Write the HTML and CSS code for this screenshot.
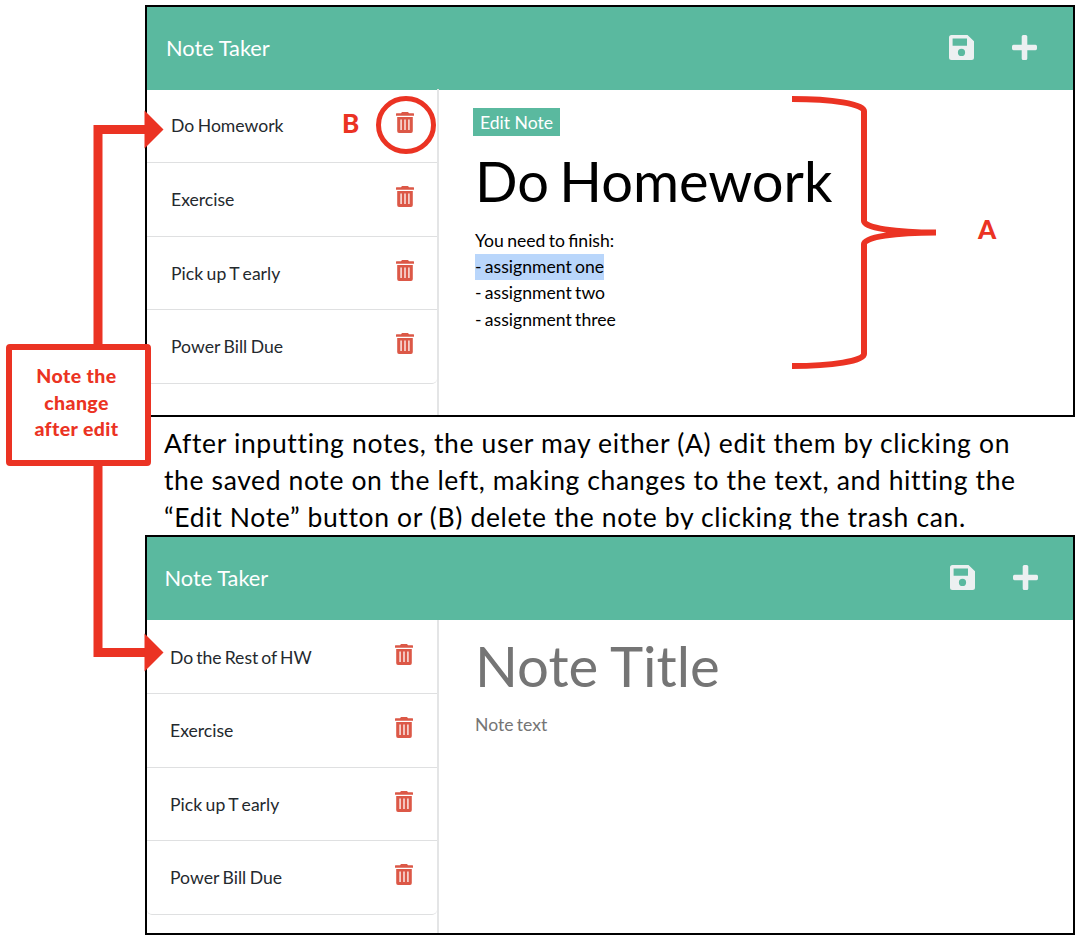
FILE: index.html
```html
<!DOCTYPE html>
<html lang="en">
<head>
<meta charset="utf-8">
<title>Note Taker</title>
<link rel="stylesheet" href="styles.css">
</head>
<body>
<svg class="defs" width="0" height="0">
  <symbol id="save" viewBox="0 0 25 25"><path fill-rule="evenodd" d="M2.5 0H18.500L25 6.300V22.500Q25 25 22.500 25H2.500Q0 25 0 22.500V2.500Q0 0 2.500 0ZM3.600 3.500V10.700H18V3.500ZM12.500 13.800A3.600 3.600 0 1 0 12.500 21A3.600 3.600 0 1 0 12.500 13.800Z"/></symbol>
  <symbol id="plus" viewBox="0 0 25 25"><path d="M11.300 0H13.700Q15.300 0 15.300 1.500V9.700H23.500Q25 9.700 25 11.400V13.600Q25 15.300 23.500 15.300H15.300V23.500Q15.300 25 13.700 25H11.300Q9.700 25 9.700 23.500V15.300H1.500Q0 15.300 0 13.600V11.400Q0 9.700 1.500 9.700H9.700V1.500Q9.700 0 11.300 0Z"/></symbol>
  <symbol id="trash" viewBox="0 0 18 21"><path d="M6 0H12L13 1.300H17.500Q18 1.300 18 2V3.700H0V2Q0 1.300 .5 1.300H5Z"/><path d="M1.200 5H16.800V19Q16.800 21 15 21H3Q1.200 21 1.200 19Z"/><path class="slots" d="M4.200 7.500H6V18H4.200ZM8.100 7.500H9.900V18H8.100ZM12 7.500H13.800V18H12Z"/></symbol>
</svg>
<main class="sheet">
  <section class="app first">
    <header class="bar"><span class="brand">Note Taker</span><svg class="tool"><use href="#save"/></svg><svg class="tool"><use href="#plus"/></svg></header>
    <div class="body">
      <ul class="list">
        <li><span>Do Homework</span><svg class="trash"><use href="#trash"/></svg></li>
        <li><span>Exercise</span><svg class="trash"><use href="#trash"/></svg></li>
        <li><span>Pick up T early</span><svg class="trash"><use href="#trash"/></svg></li>
        <li><span>Power Bill Due</span><svg class="trash"><use href="#trash"/></svg></li>
      </ul>
      <article class="note">
        <button class="edit">Edit Note</button>
        <h1>Do Homework</h1>
        <p>You need to finish:<br><mark>- assignment one</mark><br>- assignment two<br>- assignment three</p>
      </article>
    </div>
  </section>
  <div class="caption">
    <div class="line l1">After inputting notes, the user may either (A) edit them by clicking on</div>
    <div class="line l2">the saved note on the left, making changes to the text, and hitting the</div>
    <div class="line l3">“Edit Note” button or (B) delete the note by clicking the trash can.</div>
  </div>
  <section class="app second">
    <header class="bar"><span class="brand">Note Taker</span><svg class="tool"><use href="#save"/></svg><svg class="tool"><use href="#plus"/></svg></header>
    <div class="body">
      <ul class="list">
        <li><span class="tight">Do the Rest of HW</span><svg class="trash"><use href="#trash"/></svg></li>
        <li><span>Exercise</span><svg class="trash"><use href="#trash"/></svg></li>
        <li><span>Pick up T early</span><svg class="trash"><use href="#trash"/></svg></li>
        <li><span>Power Bill Due</span><svg class="trash"><use href="#trash"/></svg></li>
      </ul>
      <article class="note blank">
        <h1>Note Title</h1>
        <p>Note text</p>
      </article>
    </div>
  </section>
</main>
<svg class="marks" viewBox="0 0 1080 938">
  <g fill="none" stroke="#eb3323">
    <path stroke-width="9" d="M146 129.500H98V652.500H146"/>
    <ellipse cx="406" cy="125" rx="27.500" ry="26.500" stroke-width="5"/>
    <path stroke-width="6" d="M792 99C832 99 864 104 864 111V221C864 228 896 232.500 936 232.500C896 232.500 864 237 864 244V354C864 361 832 366 792 366"/>
  </g>
  <path fill="#eb3323" d="M144.500 110.500L163.500 129.500L144.500 148.500ZM144.500 633.500L163.500 652.500L144.500 671.500Z"/>
</svg>
<aside class="callout"><span class="c1">Note the</span><span class="c2">change</span><span class="c3">after edit</span></aside>
<b class="tag a">A</b>
<b class="tag b">B</b>
</body>
</html>
```

FILE: styles.css
```css
* { box-sizing: border-box; }
body { margin: 0; width: 1080px; height: 938px; position: relative; overflow: hidden; background: #fff; font-family: Lato, sans-serif; color: #24292e; }
.defs { position: absolute; }
.sheet { padding: 5px 5px 0 145px; }
.app { border: 2px solid #000; width: 930px; overflow: hidden; }
.first { height: 412px; }
.second { height: 400px; }
.bar { height: 83px; background: #5ab99f; display: flex; align-items: center; padding: 0 36px 2px 19px; gap: 38px; }
.brand { flex: 1; color: #fff; font-size: 21.800px; line-height: 30px; }
.second .brand { margin-left: -1.500px; }
.tool { width: 25px; height: 25px; fill: #ecf0f1; }
.second .bar { padding-right: 35px; }
.body { display: flex; height: 100%; }
.list { list-style: none; margin: 0; padding: 0; width: 292px; border-right: 2px solid #e4e5e6; }
.list li { height: 73.600px; border-bottom: 1.500px solid #dfe0e1; display: flex; justify-content: space-between; padding: 0 23px 0 24px; }
.first .list { margin-top: -.6px; }
.second .list { padding-top: .5px; }
.list li:last-child { border-radius: 0 0 5px 5px; }
.list span { font-size: 17.600px; line-height: 26px; padding-top: 24px; word-spacing: -1px; }
.list .tight { word-spacing: -1.500px; }
.list .trash { margin-top: 23px; }
.second .list li { padding: 0 24px 0 23px; }
.trash { width: 18px; height: 21px; fill: #dc5847; }
.slots { fill: #f6cfc9; }
.note { padding: 18px 0 0 36px; color: #000; }
.edit { display: block; margin: 0 0 0 -2px; width: 87px; height: 28px; padding: 2px 0 0; border: 0; background: #5ab99f; color: #fff; font: 17.600px/26px Lato, sans-serif; }
h1 { font-size: 56px; font-weight: 400; line-height: 68px; margin: 11px 0 0; white-space: nowrap; word-spacing: -4px; }
p { margin: 12.600px 0 0; font-size: 17.600px; line-height: 26.400px; word-spacing: -1.200px; }
mark { background: #b9d6fb; color: #000; display: inline-block; height: 26.400px; }
.blank { padding-top: 0; color: #757575; }
.blank h1 { font-size: 56.300px; word-spacing: -1px; }
.caption { height: 118px; padding: 8px 0 0 19px; color: #000; font-size: 26.500px; line-height: 37.300px; font-variant-ligatures: none; }
.line { white-space: nowrap; height: 37.300px; }
.l1 { letter-spacing: .66px; }
.l2 { letter-spacing: .62px; }
.l3 { letter-spacing: .64px; height: 30px; margin-top: -1px; clip-path: inset(0 0 -1px 0); }
.marks { position: absolute; left: 0; top: 0; width: 1080px; height: 938px; }
.callout { position: absolute; left: 6px; top: 344px; width: 145px; height: 122px; border: 6px solid #eb3323; border-radius: 4px; background: #fff; color: #eb3323; font-size: 19.500px; font-weight: 900; letter-spacing: .4px; line-height: 26.500px; padding: 13px 4px 0 0; text-align: center; display: flex; flex-direction: column; }
.tag { position: absolute; color: #eb3323; font-size: 26px; font-weight: 900; line-height: 30px; }
.a { left: 978px; top: 214px; }
.b { left: 342px; top: 108px; }
```
